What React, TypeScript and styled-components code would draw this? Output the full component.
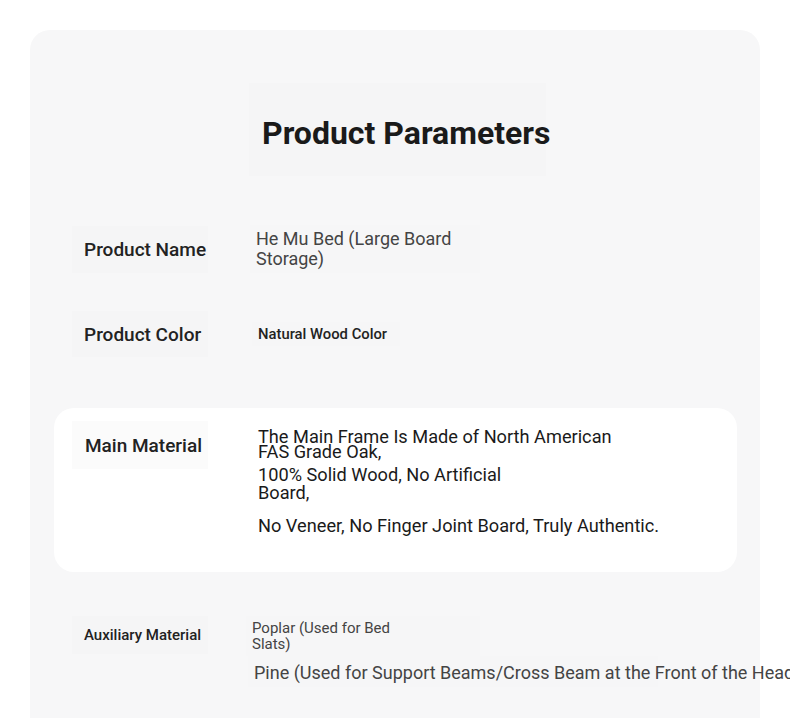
import React from "react";
import styled, { createGlobalStyle } from "styled-components";

const Global = createGlobalStyle`
  html, body { margin: 0; padding: 0; background: #ffffff; overflow: hidden; }
  body { font-family: Roboto, "Noto Sans", "Liberation Sans", sans-serif; }
`;

const Page = styled.div`
  width: 790px;
  height: 718px;
  overflow: hidden;
  padding: 30px 30px 0 30px;
  box-sizing: border-box;
`;

const Card = styled.section`
  background: #f7f7f8;
  border-radius: 20px;
  min-height: 760px;
  padding: 53px 23px 40px 24px;
  box-sizing: border-box;
  display: flex;
  flex-direction: column;
`;

const TitleBox = styled.div`
  align-self: center;
  width: 297px;
  height: 93px;
  margin-left: 4px;
  background: #f5f5f6;
  display: flex;
  align-items: center;
  justify-content: flex-start;
`;

const Title = styled.h1`
  margin: 6px 0 0 0;
  padding-left: 13px;
  white-space: nowrap;
  font-size: 32px;
  font-weight: 700;
  color: #1a1a1a;
`;

const Row = styled.div<{ $mt: number; $white?: boolean; $align?: string }>`
  margin-top: ${(p) => p.$mt}px;
  display: grid;
  grid-template-columns: 136px 1fr;
  column-gap: ${(p) => (p.$white ? 50 : 42)}px;
  align-items: ${(p) => p.$align || "center"};
  padding-left: 18px;
  ${(p) =>
    p.$white
      ? `
    background: #ffffff;
    border-radius: 20px;
    height: 164px;
    padding-top: 13px;
    box-sizing: border-box;
  `
      : ""}
`;

const Label = styled.div<{ $size: number; $h: number; $pl?: number; $bg?: string }>`
  height: ${(p) => p.$h}px;
  display: flex;
  align-items: center;
  padding-left: ${(p) => p.$pl ?? 12}px;
  background: ${(p) => p.$bg || "#f5f5f6"};
  font-size: ${(p) => p.$size}px;
  font-weight: 500;
  color: #222;
  white-space: nowrap;
`;

const ValueBox = styled.div<{ $ml: number; $w: number; $bg?: string }>`
  margin-left: ${(p) => p.$ml}px;
  width: ${(p) => p.$w}px;
  background: ${(p) => p.$bg || "transparent"};
  padding: 4px 6px;
  box-sizing: border-box;
`;

const Value = styled.p<{ $size: number; $lh: number; $w?: number; $color?: string; $weight?: number; $nowrap?: boolean; $mt?: number }>`
  margin: ${(p) => p.$mt ?? 0}px 0 0 0;
  font-size: ${(p) => p.$size}px;
  line-height: ${(p) => p.$lh}px;
  color: ${(p) => p.$color || "#444"};
  font-weight: ${(p) => p.$weight ?? 400};
  ${(p) => (p.$w ? `width: ${p.$w}px;` : "")}
  ${(p) => (p.$nowrap ? "white-space: nowrap;" : "")}
`;

const MaterialValues = styled.div`
  padding-top: 8px;
`;

const AuxValues = styled.div`
  display: flex;
  flex-direction: column;
`;

export default function App() {
  return (
    <>
      <Global />
      <Page>
        <Card>
          <TitleBox>
            <Title>Product Parameters</Title>
          </TitleBox>

          <Row $mt={49}>
            <Label $size={19} $h={47}>Product Name</Label>
            <ValueBox $ml={0} $w={230} $bg="#f6f6f7">
              <Value $size={18} $lh={20} $w={212} $color="#444">
                He Mu Bed (Large Board Storage)
              </Value>
            </ValueBox>
          </Row>

          <Row $mt={38}>
            <Label $size={19} $h={46}>Product Color</Label>
            <ValueBox $ml={2} $w={148} $bg="#f6f6f7">
              <Value $size={14.8} $lh={16} $color="#222" $weight={500} $nowrap>
                Natural Wood Color
              </Value>
            </ValueBox>
          </Row>

          <Row $mt={51} $white $align="start">
            <Label $size={19} $h={48} $pl={13} $bg="#fbfbfb">Main Material</Label>
            <MaterialValues>
              <Value $size={18.2} $lh={15} $w={360} $color="#1a1a1a">
                The Main Frame Is Made of North American FAS Grade Oak,
              </Value>
              <Value $size={18.2} $lh={18} $w={255} $color="#1a1a1a" $mt={7}>
                100% Solid Wood, No Artificial Board,
              </Value>
              <Value $size={18.2} $lh={18} $color="#1a1a1a" $nowrap $mt={15}>
                No Veneer, No Finger Joint Board, Truly Authentic.
              </Value>
            </MaterialValues>
          </Row>

          <Row $mt={44} $align="start">
            <Label $size={15} $h={38}>Auxiliary Material</Label>
            <AuxValues>
              <ValueBox $ml={-4} $w={234} $bg="#f6f6f7">
                <Value $size={15} $lh={16} $w={155} $color="#444">
                  Poplar (Used for Bed Slats)
                </Value>
              </ValueBox>
              <ValueBox $ml={-2} $w={410} $bg="#f6f6f7">
                <Value $size={18} $lh={20} $color="#444" $nowrap $mt={3}>
                  Pine (Used for Support Beams/Cross Beam at the Front of the Headboard)
                </Value>
              </ValueBox>
            </AuxValues>
          </Row>
        </Card>
      </Page>
    </>
  );
}
